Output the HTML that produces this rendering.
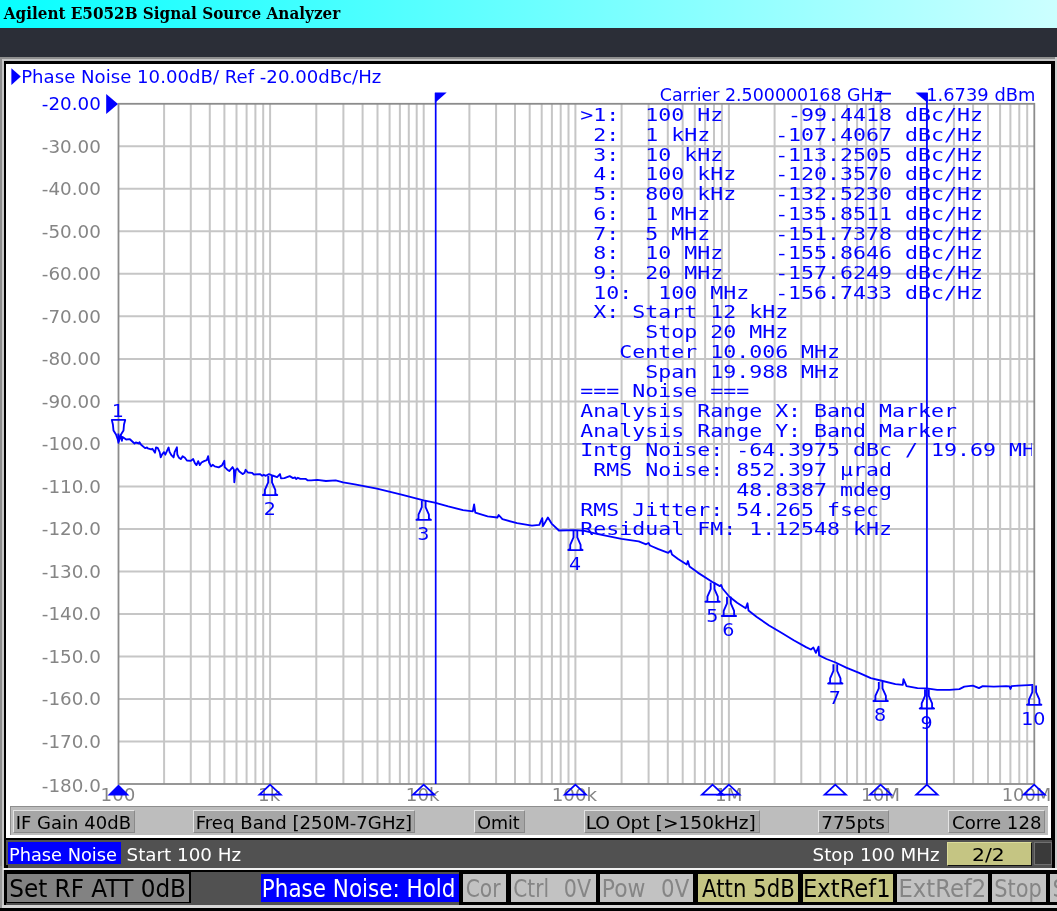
<!DOCTYPE html>
<html><head><meta charset="utf-8"><title>Agilent E5052B Signal Source Analyzer</title>
<style>
html,body{margin:0;padding:0;}
body{width:1057px;height:911px;overflow:hidden;position:relative;background:#2b2e37;font-family:"DejaVu Sans","Liberation Sans",sans-serif;}
div{position:absolute;box-sizing:border-box;white-space:nowrap;}
#title{left:0;top:0;width:1057px;height:28px;background:linear-gradient(90deg,#08ffff 0%,#ccffff 100%);}
#band{left:0;top:28px;width:1057px;height:29px;background:#2b2e37;}
#frame{left:0;top:57px;width:1057px;height:854px;background:#8e8e8e;}
#lt{left:2px;top:59.3px;width:1055px;height:852px;background:#c6c6c6;}
#blk{left:3.5px;top:61px;width:1051px;height:848px;background:#000;}
#rt{left:1054.5px;top:57px;width:2.5px;height:854px;background:#cdcdcd;}
#white{left:6px;top:63.7px;width:1045.4px;height:773.9px;background:#fff;}
#strip{left:10px;top:806.2px;width:1037.6px;height:28.4px;background:#bdbdbd;border-top:1.6px solid #8e8e8e;border-left:1.5px solid #8e8e8e;}
.sb{top:809.6px;height:23.2px;background:#a6a6a6;border-top:1.5px solid #e4e4e4;border-left:1.5px solid #e4e4e4;border-right:1.5px solid #8a8a8a;border-bottom:1.5px solid #8a8a8a;}
#row2{left:5.5px;top:839.8px;width:1046.3px;height:28.2px;background:#515151;}
.r2{top:842.2px;height:21.7px;}
#bar{left:5.5px;top:872.3px;width:1052px;height:32.5px;background:#515151;}
.bb{top:873.6px;height:28px;}
</style></head><body>
<div id="title"></div>
<div id="band"></div>
<div id="frame"></div><div id="lt"></div><div id="blk"></div><div id="rt"></div>
<div id="white"></div>
<div id="strip"></div>
<div class="sb" style="left:13.3px;width:121.6px"></div>
<div class="sb" style="left:192.8px;width:222.2px"></div>
<div class="sb" style="left:474.4px;width:50.5px"></div>
<div class="sb" style="left:583.6px;width:176.1px"></div>
<div class="sb" style="left:818.2px;width:71.0px"></div>
<div class="sb" style="left:948.4px;width:96.6px"></div>
<div id="row2"></div>
<div class="r2" style="left:7.7px;width:113.6px;background:#0000ff"></div>
<div class="r2" style="left:947.4px;width:84.4px;height:23.4px;background:#c5c583;border-top:1px solid #dcdc9a;border-left:1px solid #dcdc9a;border-right:1.6px solid #111;border-bottom:1.8px solid #111"></div>
<div style="left:1033.7px;top:841.5px;width:18.6px;height:23.5px;background:#3a3a3a;border:1.5px solid #707070"></div>
<div style="left:3.5px;top:864.6px;width:4.2px;height:3.6px;background:#000"></div>
<div style="left:3px;top:868px;width:1054px;height:2.3px;background:#f0f0f0"></div>
<div style="left:3.5px;top:870.3px;width:1053.5px;height:3.4px;background:#000"></div>
<div id="bar"></div>
<div style="left:5.5px;top:872.3px;width:185.2px;height:30.9px;background:#000"></div>
<div class="bb" style="left:7.0px;width:181.9px;background:#828282;"></div>
<div class="bb" style="left:260.9px;width:197.9px;background:#0000ff;"></div>
<div style="left:458.8px;top:872.3px;width:598.2px;height:32.5px;background:#000"></div>
<div class="bb" style="left:462.8px;width:43.7px;background:#c2c2c2;"></div>
<div class="bb" style="left:510.5px;width:85.4px;background:#c2c2c2;"></div>
<div class="bb" style="left:599.9px;width:93.4px;background:#c2c2c2;"></div>
<div class="bb" style="left:698.3px;width:99.9px;background:#c5c583;"></div>
<div class="bb" style="left:803px;width:90.1px;background:#c5c583;"></div>
<div class="bb" style="left:897.1px;width:91.0px;background:#c2c2c2;"></div>
<div class="bb" style="left:992px;width:53.7px;background:#c2c2c2;"></div>
<div class="bb" style="left:1050px;width:7.0px;background:#c2c2c2;"></div>

<div style="left:0;top:904.8px;width:1057px;height:0.6px;background:#000"></div><div style="left:0;top:905.4px;width:1057px;height:3px;background:#d6d6d6"></div>
<div style="left:0;top:908.4px;width:1057px;height:2.6px;background:#000"></div>
<div style="left:0;top:866px;width:2px;height:42px;background:#9a9a9a"></div>
<svg width="1057" height="911" viewBox="0 0 1057 911" style="position:absolute;left:0;top:0;will-change:transform" font-family='"DejaVu Sans","Liberation Sans",sans-serif'>
<path d="M164.1 103.8V784.0M190.8 103.8V784.0M209.8 103.8V784.0M224.4 103.8V784.0M236.5 103.8V784.0M246.6 103.8V784.0M255.4 103.8V784.0M263.2 103.8V784.0M270.1 103.8V784.0M316.3 103.8V784.0M343.4 103.8V784.0M362.6 103.8V784.0M377.5 103.8V784.0M389.6 103.8V784.0M399.9 103.8V784.0M408.8 103.8V784.0M416.7 103.8V784.0M423.7 103.8V784.0M469.4 103.8V784.0M496.1 103.8V784.0M515.0 103.8V784.0M529.7 103.8V784.0M541.7 103.8V784.0M551.9 103.8V784.0M560.7 103.8V784.0M568.5 103.8V784.0M575.4 103.8V784.0M621.6 103.8V784.0M648.6 103.8V784.0M667.8 103.8V784.0M682.7 103.8V784.0M694.8 103.8V784.0M705.1 103.8V784.0M714.0 103.8V784.0M721.9 103.8V784.0M728.9 103.8V784.0M774.6 103.8V784.0M801.3 103.8V784.0M820.3 103.8V784.0M835.0 103.8V784.0M847.0 103.8V784.0M857.1 103.8V784.0M865.9 103.8V784.0M873.7 103.8V784.0M880.6 103.8V784.0M926.9 103.8V784.0M953.9 103.8V784.0M973.1 103.8V784.0M988.0 103.8V784.0M1000.1 103.8V784.0M1010.4 103.8V784.0M1019.3 103.8V784.0M1027.2 103.8V784.0M118.5 146.3H1034.2M118.5 188.8H1034.2M118.5 231.3H1034.2M118.5 273.8H1034.2M118.5 316.3H1034.2M118.5 358.9H1034.2M118.5 401.4H1034.2M118.5 443.9H1034.2M118.5 486.4H1034.2M118.5 528.9H1034.2M118.5 571.4H1034.2M118.5 613.9H1034.2M118.5 656.4H1034.2M118.5 698.9H1034.2M118.5 741.4H1034.2" stroke="#c6c6c6" stroke-width="2" fill="none"/>
<rect x="118.5" y="103.8" width="915.8" height="680.2" fill="none" stroke="#8c8c8c" stroke-width="1.8"/>
<text transform="translate(41.78,110.00) scale(1.0239,1)" font-size="17.9" fill="#0000ff">-20.00</text>
<text transform="translate(41.78,152.51) scale(1.0239,1)" font-size="17.9" fill="#858585">-30.00</text>
<text transform="translate(41.78,195.02) scale(1.0239,1)" font-size="17.9" fill="#858585">-40.00</text>
<text transform="translate(41.78,237.53) scale(1.0239,1)" font-size="17.9" fill="#858585">-50.00</text>
<text transform="translate(41.78,280.04) scale(1.0239,1)" font-size="17.9" fill="#858585">-60.00</text>
<text transform="translate(41.78,322.55) scale(1.0239,1)" font-size="17.9" fill="#858585">-70.00</text>
<text transform="translate(41.78,365.06) scale(1.0239,1)" font-size="17.9" fill="#858585">-80.00</text>
<text transform="translate(41.78,407.57) scale(1.0239,1)" font-size="17.9" fill="#858585">-90.00</text>
<text transform="translate(41.78,450.08) scale(1.0239,1)" font-size="17.9" fill="#858585">-100.0</text>
<text transform="translate(41.78,492.58) scale(1.0239,1)" font-size="17.9" fill="#858585">-110.0</text>
<text transform="translate(41.78,535.09) scale(1.0239,1)" font-size="17.9" fill="#858585">-120.0</text>
<text transform="translate(41.78,577.60) scale(1.0239,1)" font-size="17.9" fill="#858585">-130.0</text>
<text transform="translate(41.78,620.11) scale(1.0239,1)" font-size="17.9" fill="#858585">-140.0</text>
<text transform="translate(41.78,662.62) scale(1.0239,1)" font-size="17.9" fill="#858585">-150.0</text>
<text transform="translate(41.78,705.13) scale(1.0239,1)" font-size="17.9" fill="#858585">-160.0</text>
<text transform="translate(41.78,747.64) scale(1.0239,1)" font-size="17.9" fill="#858585">-170.0</text>
<text transform="translate(41.78,792.35) scale(1.0239,1)" font-size="17.9" fill="#858585">-180.0</text>
<text transform="translate(100.60,801.20) scale(1.0200,1)" font-size="17.9" fill="#858585">100</text>
<text transform="translate(258.05,801.20) scale(1.0200,1)" font-size="17.9" fill="#858585">1k</text>
<text transform="translate(405.81,801.20) scale(1.0200,1)" font-size="17.9" fill="#858585">10k</text>
<text transform="translate(551.71,801.20) scale(1.0200,1)" font-size="17.9" fill="#858585">100k</text>
<text transform="translate(715.12,801.20) scale(1.0200,1)" font-size="17.9" fill="#858585">1M</text>
<text transform="translate(861.02,801.20) scale(1.0200,1)" font-size="17.9" fill="#858585">10M</text>
<text transform="translate(1001.63,801.20) scale(1.0019,1)" font-size="17.9" fill="#858585">100M</text>
<path d="M11.4 68.2V84.9L20.8 76.5Z" fill="#0000ff"/>
<text transform="translate(21.18,83.00) scale(1.0299,1)" font-size="17.6" fill="#0000ff">Phase Noise 10.00dB/ Ref -20.00dBc/Hz</text>
<path d="M106.2 94V114L118 104Z" fill="#0000ff"/>
<text transform="translate(659.74,101.00) scale(0.9922,1)" font-size="17.6" fill="#0000ff">Carrier 2.500000168 GHz</text>
<path d="M876.7 93.6H891M880.4 93.6V102.4" stroke="#0000ff" stroke-width="1.7" fill="none"/>
<text transform="translate(926.23,101.00) scale(1.0154,1)" font-size="17.6" fill="#0000ff">1.6739 dBm</text>
<path d="M435.7 93V784.0M926.9 93V784.0" stroke="#0000ff" stroke-width="1.7" fill="none"/>
<path d="M434.9 92.6H446.7L434.9 103Z" fill="#0000ff"/>
<path d="M927.7 92.6H915.4L927.7 103Z" fill="#0000ff"/>
<svg x="118.45" y="60" width="913.55" height="760" viewBox="118.45 60 913.55 760" overflow="hidden"><g transform="translate(580.3,0) scale(1.2482,1)" font-family='"DejaVu Sans Mono","Liberation Mono",monospace' font-size="17.3" fill="#0000ff">
<text x="0" y="121.3">&gt;1:&#160;&#160;100&#160;Hz&#160;&#160;&#160;&#160;&#160;-99.4418&#160;dBc/Hz</text>
<text x="0" y="141.0">&#160;2:&#160;&#160;1&#160;kHz&#160;&#160;&#160;&#160;&#160;-107.4067&#160;dBc/Hz</text>
<text x="0" y="160.7">&#160;3:&#160;&#160;10&#160;kHz&#160;&#160;&#160;&#160;-113.2505&#160;dBc/Hz</text>
<text x="0" y="180.5">&#160;4:&#160;&#160;100&#160;kHz&#160;&#160;&#160;-120.3570&#160;dBc/Hz</text>
<text x="0" y="200.2">&#160;5:&#160;&#160;800&#160;kHz&#160;&#160;&#160;-132.5230&#160;dBc/Hz</text>
<text x="0" y="219.9">&#160;6:&#160;&#160;1&#160;MHz&#160;&#160;&#160;&#160;&#160;-135.8511&#160;dBc/Hz</text>
<text x="0" y="239.6">&#160;7:&#160;&#160;5&#160;MHz&#160;&#160;&#160;&#160;&#160;-151.7378&#160;dBc/Hz</text>
<text x="0" y="259.3">&#160;8:&#160;&#160;10&#160;MHz&#160;&#160;&#160;&#160;-155.8646&#160;dBc/Hz</text>
<text x="0" y="279.1">&#160;9:&#160;&#160;20&#160;MHz&#160;&#160;&#160;&#160;-157.6249&#160;dBc/Hz</text>
<text x="0" y="298.8">&#160;10:&#160;&#160;100&#160;MHz&#160;&#160;-156.7433&#160;dBc/Hz</text>
<text x="0" y="318.5">&#160;X:&#160;Start&#160;12&#160;kHz</text>
<text x="0" y="338.2">&#160;&#160;&#160;&#160;&#160;Stop&#160;20&#160;MHz</text>
<text x="0" y="357.9">&#160;&#160;&#160;Center&#160;10.006&#160;MHz</text>
<text x="0" y="377.7">&#160;&#160;&#160;&#160;&#160;Span&#160;19.988&#160;MHz</text>
<text x="0" y="397.4">===&#160;Noise&#160;===</text>
<text x="0" y="417.1">Analysis&#160;Range&#160;X:&#160;Band&#160;Marker</text>
<text x="0" y="436.8">Analysis&#160;Range&#160;Y:&#160;Band&#160;Marker</text>
<text x="0" y="456.5">Intg&#160;Noise:&#160;-64.3975&#160;dBc&#160;/&#160;19.69&#160;MHz</text>
<text x="0" y="476.3">&#160;RMS&#160;Noise:&#160;852.397&#160;µrad</text>
<text x="0" y="496.0">&#160;&#160;&#160;&#160;&#160;&#160;&#160;&#160;&#160;&#160;&#160;&#160;48.8387&#160;mdeg</text>
<text x="0" y="515.7">RMS&#160;Jitter:&#160;54.265&#160;fsec</text>
<text x="0" y="535.4">Residual&#160;FM:&#160;1.12548&#160;kHz</text>
</g></svg>
<polyline points="118.3,433.5 118.4,442.8 120.6,434.9 121.9,440.8 122.6,436.9 126.2,439.5 129.9,439.2 134.5,443.5 135.8,442.5 139.2,443.5 139.5,442.2 141.1,444.8 145.1,448.1 147.1,447.5 147.8,448.4 151.1,449.4 152.4,448.8 155.0,452.7 156.0,447.5 157.7,447.8 159.7,452.1 160.7,457.4 162.3,454.1 164.0,452.1 165.3,454.7 167.0,450.8 168.6,447.5 169.6,452.1 171.6,455.4 173.6,457.4 174.6,452.1 176.9,447.3 177.3,454.5 179.0,457.8 181.0,459.1 182.6,456.2 184.9,457.8 186.9,460.5 190.9,460.8 193.2,459.1 194.9,463.1 196.5,465.1 198.2,461.1 199.8,465.1 201.5,462.5 204.1,461.1 206.8,460.1 208.1,456.2 209.1,462.5 211.1,466.4 212.7,464.8 214.7,466.4 218.7,467.4 222.0,465.4 224.3,460.8 224.7,467.1 227.3,469.7 229.3,471.1 232.6,467.1 233.9,469.7 234.3,482.3 235.6,470.4 237.3,468.4 239.3,471.5 242.6,474.1 244.6,472.8 245.6,469.8 247.9,472.5 251.9,472.8 253.9,474.5 259.9,474.1 262.2,475.8 263.8,474.8 265.8,475.8 269.1,474.1 272.4,475.5 277.1,477.1 280.0,474.1 281.0,478.4 284.4,478.1 289.7,476.1 293.0,478.1 295.0,477.4 296.3,479.1 297.9,477.8 300.3,478.8 305.5,478.8 307.5,480.3 311.1,480.4 317.3,479.8 325.9,481.0 335.7,480.4 343.1,482.3 354.8,484.3 376.9,488.7 401.5,494.6 423.6,500.3 434.7,502.7 448.2,506.4 463.0,510.1 472.8,511.3 474.1,504.5 475.3,512.6 487.6,516.3 497.4,517.5 498.7,515.0 502.4,519.2 517.1,523.1 531.9,525.6 539.3,524.9 542.2,518.2 543.0,526.1 547.9,517.5 551.6,523.6 558.9,530.5 575.3,530.2 584.6,530.8 596.9,533.9 609.2,536.4 621.5,538.9 638.7,541.3 646.1,544.3 648.5,543.0 650.0,545.5 658.4,549.2 668.2,552.9 670.7,550.4 672.0,554.5 678.1,559.0 686.7,564.5 687.9,561.0 689.5,566.5 697.8,572.6 712.0,581.7 719.9,586.1 721.1,584.9 722.5,588.5 729.2,596.5 737.1,602.8 745.7,608.2 747.5,603.3 748.5,610.5 756.8,616.9 769.1,625.5 781.4,632.8 793.7,640.2 806.0,647.1 810.9,649.5 813.4,647.6 815.9,652.9 818.6,646.7 819.1,655.4 826.5,659.0 835.6,662.5 846.2,667.7 858.5,672.6 870.8,678.2 880.6,680.5 895.4,684.1 902.8,684.9 903.5,679.2 906.5,686.1 917.5,688.1 926.6,688.4 937.2,689.8 949.5,689.8 959.4,689.1 964.3,686.6 972.9,685.6 979.0,688.1 982.7,686.1 993.8,686.6 1006.1,686.1 1009.5,686.3 1010.5,689.0 1011.5,686.1 1018.4,685.6 1033.2,684.9" fill="none" stroke="#0000ff" stroke-width="1.85" stroke-linejoin="round"/>
<path d="M118.5 441.5L116.0 434.5L113.5 430.5L112.9 424.5L111.8 419.9H125.2L124.0 424.5L123.5 430.5L121.0 434.5Z" fill="none" stroke="#0000ff" stroke-width="1.85" stroke-linejoin="round"/>
<text transform="translate(112.08,417.00) scale(1.0300,1)" font-size="18.0" fill="#0000ff">1</text>
<path d="M118.5 784.4L107.5 795.4H129.4Z" fill="#0000ff"/>
<path d="M268.2 475.9V482.4L264.9 489.9V493.9L262.9 495.1H277.3L275.3 493.9V489.9L272.0 482.4V475.9" fill="none" stroke="#0000ff" stroke-width="1.85" stroke-linejoin="round"/>
<text transform="translate(263.83,515.26) scale(1.0600,1)" font-size="18.0" fill="#0000ff">2</text>
<path d="M270.1 784.7L259.5 794.7H280.7Z" fill="none" stroke="#0000ff" stroke-width="1.8"/>
<path d="M421.8 500.7V507.2L418.5 514.7V518.7L416.5 519.9H430.9L428.9 518.7V514.7L425.6 507.2V500.7" fill="none" stroke="#0000ff" stroke-width="1.85" stroke-linejoin="round"/>
<text transform="translate(417.19,540.10) scale(1.0600,1)" font-size="18.0" fill="#0000ff">3</text>
<path d="M423.7 784.7L413.1 794.7H434.3Z" fill="none" stroke="#0000ff" stroke-width="1.8"/>
<path d="M573.5 530.9V537.4L570.2 544.9V548.9L568.2 550.1H582.6L580.6 548.9V544.9L577.3 537.4V530.9" fill="none" stroke="#0000ff" stroke-width="1.85" stroke-linejoin="round"/>
<text transform="translate(568.89,570.31) scale(1.0600,1)" font-size="18.0" fill="#0000ff">4</text>
<path d="M575.4 784.7L564.8 794.7H586.0Z" fill="none" stroke="#0000ff" stroke-width="1.8"/>
<path d="M710.7 582.6V589.1L707.4 596.6V600.6L705.4 601.8H719.8L717.8 600.6V596.6L714.5 589.1V582.6" fill="none" stroke="#0000ff" stroke-width="1.85" stroke-linejoin="round"/>
<text transform="translate(706.14,622.03) scale(1.0600,1)" font-size="18.0" fill="#0000ff">5</text>
<path d="M712.6 784.7L702.0 794.7H723.2Z" fill="none" stroke="#0000ff" stroke-width="1.8"/>
<path d="M727.0 596.8V603.3L723.7 610.8V614.8L721.7 616.0H736.1L734.1 614.8V610.8L730.8 603.3V596.8" fill="none" stroke="#0000ff" stroke-width="1.85" stroke-linejoin="round"/>
<text transform="translate(722.25,636.18) scale(1.0600,1)" font-size="18.0" fill="#0000ff">6</text>
<path d="M728.9 784.7L718.3 794.7H739.5Z" fill="none" stroke="#0000ff" stroke-width="1.8"/>
<path d="M833.4 664.3V670.8L830.1 678.3V682.3L828.1 683.5H842.5L840.5 682.3V678.3L837.2 670.8V664.3" fill="none" stroke="#0000ff" stroke-width="1.85" stroke-linejoin="round"/>
<text transform="translate(828.79,703.71) scale(1.0600,1)" font-size="18.0" fill="#0000ff">7</text>
<path d="M835.3 784.7L824.7 794.7H845.9Z" fill="none" stroke="#0000ff" stroke-width="1.8"/>
<path d="M878.8 681.9V688.4L875.4 695.9V699.9L873.4 701.1H887.9L885.9 699.9V695.9L882.5 688.4V681.9" fill="none" stroke="#0000ff" stroke-width="1.85" stroke-linejoin="round"/>
<text transform="translate(874.09,721.25) scale(1.0600,1)" font-size="18.0" fill="#0000ff">8</text>
<path d="M880.6 784.7L870.0 794.7H891.2Z" fill="none" stroke="#0000ff" stroke-width="1.8"/>
<path d="M925.0 689.3V695.8L921.7 703.3V707.3L919.7 708.5H934.1L932.1 707.3V703.3L928.8 695.8V689.3" fill="none" stroke="#0000ff" stroke-width="1.85" stroke-linejoin="round"/>
<text transform="translate(920.41,728.73) scale(1.0600,1)" font-size="18.0" fill="#0000ff">9</text>
<path d="M926.9 784.7L916.3 794.7H937.5Z" fill="none" stroke="#0000ff" stroke-width="1.8"/>
<path d="M1032.3 685.6V692.1L1029.0 699.6V703.6L1027.0 704.8H1041.4L1039.4 703.6V699.6L1036.1 692.1V685.6" fill="none" stroke="#0000ff" stroke-width="1.85" stroke-linejoin="round"/>
<text transform="translate(1021.15,724.99) scale(1.0600,1)" font-size="18.0" fill="#0000ff">10</text>
<path d="M1034.2 784.7L1023.6 794.7H1044.8Z" fill="none" stroke="#0000ff" stroke-width="1.8"/>
<g font-family='"DejaVu Serif","Liberation Serif",serif' font-weight="bold">
<text transform="translate(3.75,19.20) scale(0.9572,1)" font-size="15.9" fill="#000">Agilent E5052B Signal Source Analyzer</text>
</g>
<text transform="translate(15.69,828.50) scale(0.9905,1)" font-size="18.2" fill="#000">IF Gain 40dB</text>
<text transform="translate(195.68,828.50) scale(0.9957,1)" font-size="18.2" fill="#000">Freq Band [250M-7GHz]</text>
<text transform="translate(477.14,828.50) scale(0.9612,1)" font-size="18.2" fill="#000">Omit</text>
<text transform="translate(585.63,828.50) scale(1.0241,1)" font-size="18.2" fill="#000">LO Opt [&gt;150kHz]</text>
<text transform="translate(821.33,828.50) scale(1.0115,1)" font-size="18.2" fill="#000">775pts</text>
<text transform="translate(952.00,828.50) scale(0.9973,1)" font-size="18.2" fill="#000">Corre 128</text>
<text transform="translate(9.01,860.60) scale(0.9661,1)" font-size="18.4" fill="#fff">Phase Noise</text>
<text transform="translate(126.51,860.60) scale(0.9952,1)" font-size="18.4" fill="#fff">Start 100 Hz</text>
<text transform="translate(812.61,860.60) scale(0.9926,1)" font-size="18.4" fill="#fff">Stop 100 MHz</text>
<text transform="translate(972.08,860.60) scale(1.1058,1)" font-size="18.4" fill="#000">2/2</text>
<text transform="translate(9.19,897.30) scale(0.9656,1)" font-size="24" fill="#000">Set RF ATT 0dB</text>
<text transform="translate(261.86,897.30) scale(0.8961,1)" font-size="24" fill="#fff">Phase Noise: Hold</text>
<text transform="translate(465.69,897.30) scale(0.8433,1)" font-size="24" fill="#858585">Cor</text>
<text transform="translate(513.29,897.30) scale(0.8384,1)" font-size="24" fill="#858585">Ctrl</text>
<text transform="translate(563.75,897.30) scale(0.8635,1)" font-size="24" fill="#858585">0V</text>
<text transform="translate(601.82,897.30) scale(0.9117,1)" font-size="24" fill="#858585">Pow</text>
<text transform="translate(661.12,897.30) scale(0.8869,1)" font-size="24" fill="#858585">0V</text>
<text transform="translate(702.09,897.30) scale(0.8859,1)" font-size="24" fill="#000">Attn 5dB</text>
<text transform="translate(803.05,897.30) scale(0.9441,1)" font-size="24" fill="#000">ExtRef1</text>
<text transform="translate(898.44,897.30) scale(0.9467,1)" font-size="24" fill="#858585">ExtRef2</text>
<text transform="translate(994.24,897.30) scale(0.8720,1)" font-size="24" fill="#858585">Stop</text>
<text transform="translate(1052.6,897.3) scale(0.9,1)" font-size="24" fill="#858585">S</text>
</svg>
</body></html>
